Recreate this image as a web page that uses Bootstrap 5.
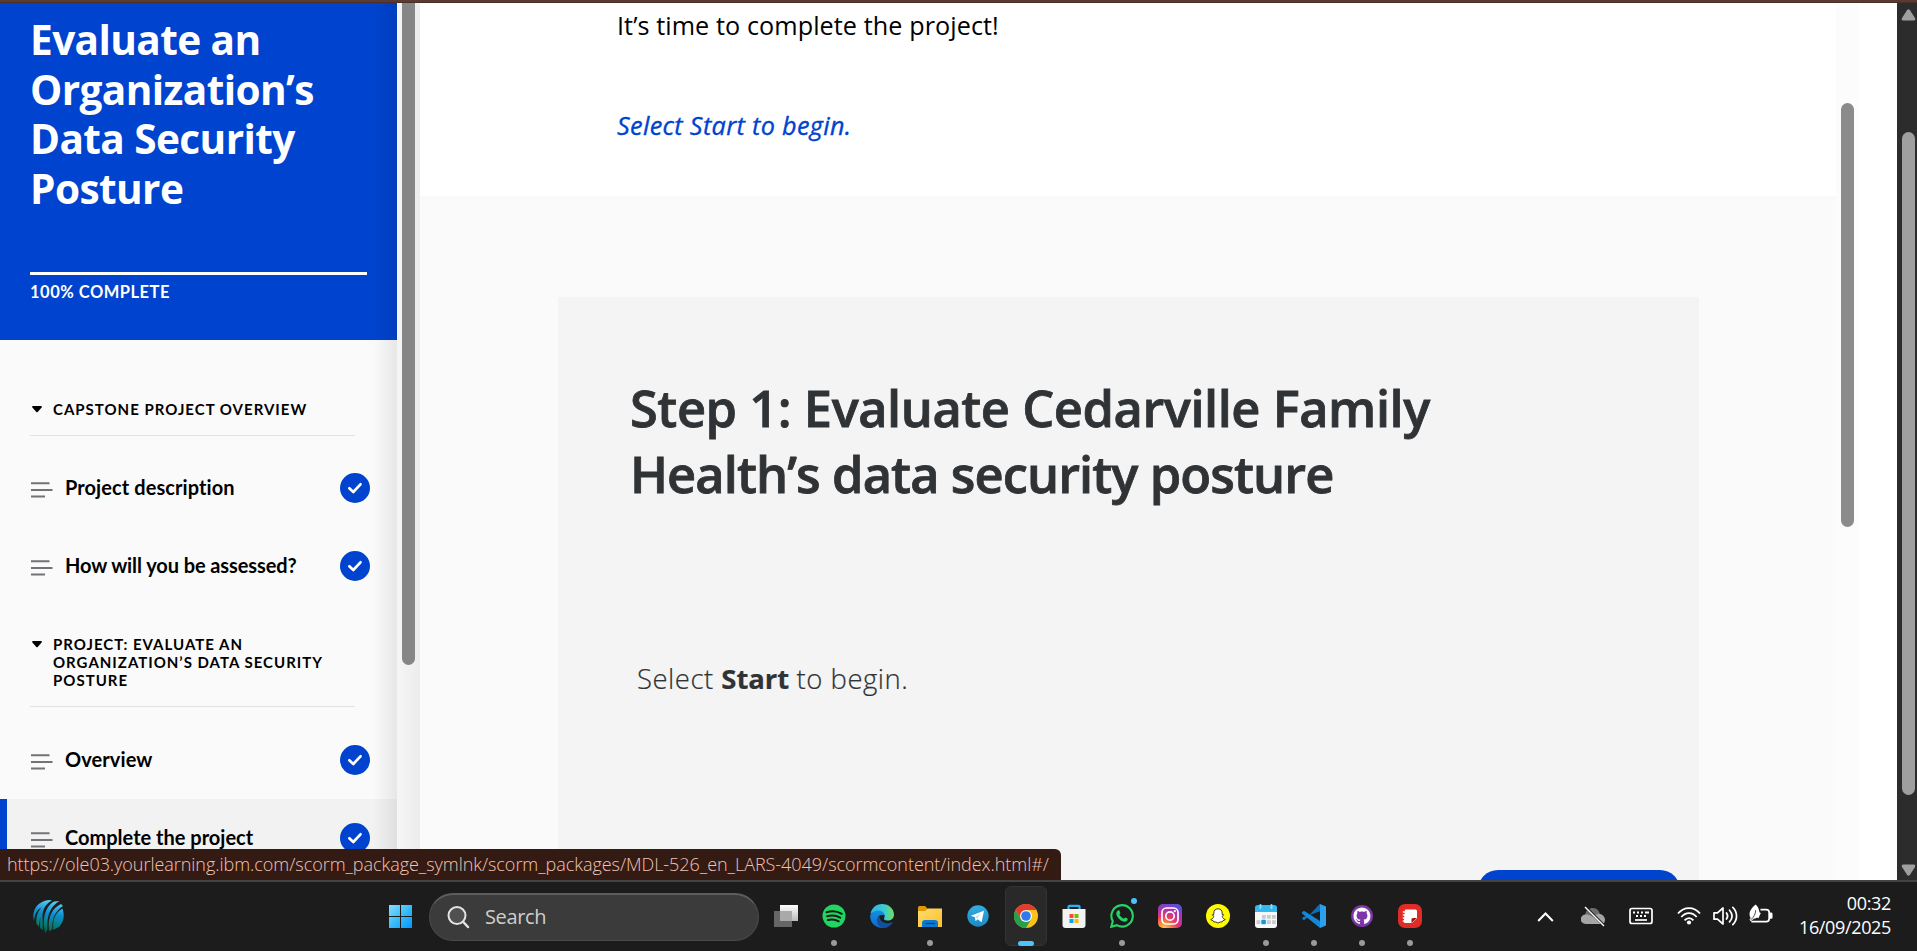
<!DOCTYPE html>
<html lang="en">
<head>
<meta charset="utf-8">
<meta name="viewport" content="width=device-width, initial-scale=1">
<title>Evaluate an Organization’s Data Security Posture</title>
<link href="https://cdn.jsdelivr.net/npm/bootstrap@5.3.0/dist/css/bootstrap.min.css" rel="stylesheet">
<style>
  :root { --brand: #0043ce; }
  body { height: 951px; overflow: hidden; font-family: "Open Sans", "Noto Sans", sans-serif; background: #fff; color: #000; line-height: 1.2; }
  .tab-edge { height: 3px; flex: none; background: #5a3a32; border-bottom: 1px solid #4a2f28; }
  .viewport { height: 877px; flex: none; }
  /* sidebar */
  .course-nav { width: 397px; flex: none; background: #fafafa; font-family: Lato, sans-serif; }
  .course-nav::after { content: ""; position: absolute; inset: 0 0 0 auto; width: 24px; background: linear-gradient(90deg, rgba(0,0,0,0), rgba(0,0,0,.08)); pointer-events: none; }
  .course-head { height: 337px; flex: none; background: var(--brand); padding: 12px 30px 0 30px; color: #fff; }
  .course-title { font: 700 40.6px/49.6px "Open Sans", sans-serif; height: 257px; margin: 0; letter-spacing: -.6px; white-space: nowrap; }
  .course-bar { height: 3px; background: #fff; }
  .course-pct { font-size: 16.5px; line-height: 20px; font-weight: 700; letter-spacing: .5px; margin-top: 7px; }
  .group-head { margin: 0 42px 13px 30px; padding: 30px 0 17px; border-bottom: 1px solid #e2e2e2; font-size: 15px; line-height: 18px; font-weight: 700; letter-spacing: 1px; gap: 10px; white-space: nowrap; }
  .group-head svg { margin-left: 1px; }
  .group-head.first-group { padding-top: 60px; }
  .group-head.tall-gap { margin-bottom: 14px; }
  .lesson { height: 78px; flex: none; padding: 0 27px 0 30px; font-size: 20px; font-weight: 700; letter-spacing: .08px; }
  .lesson span { margin-left: 12px; margin-top: -2px; }
  .lesson.active { background: #f2f2f2; box-shadow: inset 7px 0 var(--brand); }
  .rail { width: 23px; flex: none; padding: 0 5px; background: linear-gradient(90deg, #f6f6f6, #ececec); }
  .thumb { width: 13px; border-radius: 7px; background: #868686; }
  /* content */
  .intro { height: 193px; flex: none; padding: 2px 0 0 197px; font-size: 25.2px; line-height: 40px; }
  .intro p { margin: 0 0 60px; white-space: nowrap; letter-spacing: .08px; }
  .intro .cue { color: var(--brand); font-style: italic; font-weight: 500; letter-spacing: .35px; margin: 0; -webkit-text-stroke: .35px var(--brand); }
  .stage { background: #fafafa; padding: 101px 137px 0 138px; }
  .step { background: #f4f4f4; padding: 78px 20px 0 72px; height: 583px; color: #303336; }
  .step h1 { font-size: 50.6px; line-height: 66px; font-weight: 600; margin: 0; white-space: nowrap; letter-spacing: -.46px; -webkit-text-stroke: .8px #303336; }
  .step h1 .line2 { letter-spacing: -.92px; }
  .step .start-cue { font-size: 27.5px; line-height: 40px; font-weight: 300; margin: 152px 0 0 7px; letter-spacing: .5px; -webkit-text-stroke: .2px #303336; }
  .step .start-cue b { font-weight: 700; letter-spacing: -.1px; }
  .start-btn { width: 202px; height: 40px; border-radius: 20px; background: var(--brand); margin: 171px -1px 0 auto; }
  .inner-rail { width: 23px; flex: none; background: #fcfcfc; padding: 100px 5px 0; }
  .outer-rail { width: 20px; flex: none; background: #2c2c2c; padding: 6px 2px 4px 4px; }
  .outer-rail .thumb { background: #9f9f9f; height: 663px; margin: 111px 0 0 1px; }
  .url-tip { left: 0; bottom: 71px; width: 1061px; height: 31px; background: #331a13; color: #f1c3b6; border-top-right-radius: 6px; padding-left: 7px; font-size: 18px; line-height: 31px; font-weight: 300; letter-spacing: -.04px; white-space: nowrap; }
  /* taskbar */
  .taskbar { height: 71px; flex: none; background: #1c1c1c; border-top: 2px solid #434343; }
  .search-pill { width: 330px; height: 48px; border-radius: 24px; background: #3b3b3b; border: 1px solid #4a4a4a; border-top: 2px solid #5d5d5d; color: #cfcfcf; font-size: 20px; letter-spacing: -.38px; padding-left: 17px; }
  .app { width: 48px; height: 69px; flex: none; position: relative; }
  .app svg { margin-top: -1px; }
  .app.running::after { content: ""; position: absolute; left: 21px; bottom: 5px; width: 6px; height: 6px; border-radius: 3px; background: #9a9a9a; }
  .app.current::before { content: ""; position: absolute; left: 3px; top: 4px; width: 42px; height: 60px; border-radius: 6px; background: #292929; border: 1px solid #333; }
  .app.current::after { content: ""; position: absolute; left: 16px; bottom: 5px; width: 16px; height: 5px; border-radius: 3px; background: #4cc2ff; }
  .app.current svg { position: relative; }
  .clock { font-size: 18px; line-height: 24px; letter-spacing: -.35px; color: #fff; margin: 0 26px 4px 19px; width: 99px; }
  svg { display: block; flex: none; }
</style>
</head>
<body class="d-flex flex-column">
<svg width="0" height="0" class="position-absolute">
  <symbol id="lines" viewBox="0 0 23 18"><path d="M1 2.200h18.500M1 9h21.500M1 15.500h14" stroke="#737377" stroke-width="2" fill="none"/></symbol>
  <symbol id="tick" viewBox="0 0 30 30"><circle cx="15" cy="15" r="15" fill="#0043ce"/><path d="M9.300 15.300l4 3.700 7.200-7.700" fill="none" stroke="#fff" stroke-width="2.700" stroke-linecap="round" stroke-linejoin="round"/></symbol>
  <symbol id="caret" viewBox="0 0 12 18"><path d="M1.800 6h8.400q1.200.4.400 1.400L6.700 12q-.7.7-1.400 0L1.400 7.400Q.6 6.400 1.800 6z"/></symbol>
</svg>
<div class="tab-edge"></div>
<div class="viewport d-flex overflow-hidden">
  <aside class="course-nav d-flex flex-column position-relative overflow-hidden">
    <header class="course-head">
      <h2 class="course-title">Evaluate an<br>Organization’s<br>Data Security<br>Posture</h2>
      <div class="course-bar"></div>
      <div class="course-pct">100% COMPLETE</div>
    </header>
    <div class="group-head first-group d-flex"><svg width="12" height="18"><use href="#caret"/></svg><div>CAPSTONE PROJECT OVERVIEW</div></div>
    <div class="lesson d-flex align-items-center"><svg width="23" height="18" class="mt-1"><use href="#lines"/></svg><span>Project description</span><svg width="30" height="30" class="ms-auto"><use href="#tick"/></svg></div>
    <div class="lesson d-flex align-items-center"><svg width="23" height="18" class="mt-1"><use href="#lines"/></svg><span style="letter-spacing:-.09px">How will you be assessed?</span><svg width="30" height="30" class="ms-auto"><use href="#tick"/></svg></div>
    <div class="group-head tall-gap d-flex"><svg width="12" height="18"><use href="#caret"/></svg><div>PROJECT: EVALUATE AN<br>ORGANIZATION’S DATA SECURITY<br>POSTURE</div></div>
    <div class="lesson d-flex align-items-center"><svg width="23" height="18" class="mt-1"><use href="#lines"/></svg><span>Overview</span><svg width="30" height="30" class="ms-auto"><use href="#tick"/></svg></div>
    <div class="lesson active d-flex align-items-center"><svg width="23" height="18" class="mt-1"><use href="#lines"/></svg><span style="letter-spacing:0">Complete the project</span><svg width="30" height="30" class="ms-auto"><use href="#tick"/></svg></div>
  </aside>
  <div class="rail"><div class="thumb rounded-top-0" style="height:662px"></div></div>
  <main class="d-flex flex-column flex-grow-1">
    <section class="intro"><p>It’s time to complete the project!</p><p class="cue">Select Start to begin.</p></section>
    <section class="stage flex-grow-1">
      <div class="step">
        <h1>Step 1: Evaluate Cedarville Family<br><span class="line2">Health’s data security posture</span></h1>
        <p class="start-cue">Select <b>Start</b> to begin.</p>
        <div class="start-btn"></div>
      </div>
    </section>
  </main>
  <div class="inner-rail"><div class="thumb" style="height:424px;background:#8b8b8b"></div></div>
  <div style="width:38px" class="flex-shrink-0"></div>
  <div class="outer-rail d-flex flex-column">
    <svg width="15" height="12" viewBox="0 0 15 12"><path d="M6 1.300q1.500-2 3 0l5 7.700q1 2.500-1.500 2.500h-10Q0 11.500 1 9z" fill="#9f9f9f"/></svg>
    <div class="thumb"></div>
    <svg class="mt-auto" width="15" height="12" viewBox="0 0 15 12"><path d="M6 10.700q1.500 2 3 0l5-7.700q1-2.500-1.500-2.500h-10Q0 .5 1 3z" fill="#9f9f9f"/></svg>
  </div>
</div>
<div class="url-tip position-absolute">https://ole03.yourlearning.ibm.com/scorm_package_symlnk/scorm_packages/MDL-526_en_LARS-4049/scormcontent/index.html#/</div>

<footer class="taskbar d-flex align-items-center">
  <div style="width:389px" class="flex-shrink-0 ps-4">
    <svg style="margin-left:8px" width="32" height="34" viewBox="0 0 32 34">
      <defs><linearGradient id="icc" x1=".6" y1="0" x2=".4" y2="1"><stop offset="0" stop-color="#5fd0f2"/><stop offset=".4" stop-color="#0c8fce"/><stop offset=".75" stop-color="#087a70"/><stop offset="1" stop-color="#064f35"/></linearGradient></defs>
      <path fill="url(#icc)" d="M2 21C-1 10 6 1 17 0l3 .5C13 4 10 11 10.500 18L11 30l-3-2 .3-11-1.500 9.500L4.500 24C3.500 17 6 11 9.500 7.500 5 9.500 2.500 15 2 21zM12.500 31C10 17 14 6 22 1.500L27.500 1C19 6 14.500 15 15.500 29l-2 4.500zM17 30.500C15.500 19 19 8.500 29 4l2 2c-8 5-11.500 14-10.500 23l-3 2.500zM21.500 30c-1.500-9 1.500-17.500 9-21.500 2 6 2 12.500-3 18z"/>
    </svg>
  </div>
  <svg width="23" height="23" viewBox="0 0 23 23"><defs><linearGradient id="win" x1="0" y1="0" x2="23" y2="23" gradientUnits="userSpaceOnUse"><stop stop-color="#84dfff"/><stop offset=".5" stop-color="#38bdf9"/><stop offset="1" stop-color="#0694ff"/></linearGradient></defs><path fill="url(#win)" d="M0 0h11v11H0zM12 0h11v11H12zM0 12h11v11H0zM12 12h11v11H12z"/></svg>
  <div class="search-pill d-flex align-items-center" style="margin-left:17px">
    <svg width="23" height="23" viewBox="0 0 23 23" fill="none" stroke="#e1e4e6" stroke-linecap="round"><circle cx="10" cy="9.500" r="8.500" stroke-width="2" fill="#505050"/><path d="M16.300 16l4.700 5" stroke-width="2.500"/></svg>
    <span style="margin-left:15px">Search</span>
  </div>
  <div class="d-flex" style="margin-left:3px">
    <div class="app d-flex align-items-center justify-content-center"><svg width="24" height="24" viewBox="0 0 24 24"><defs><linearGradient id="tv" x2="0" y2="1"><stop stop-color="#fff"/><stop offset="1" stop-color="#b9b9b9"/></linearGradient></defs><path fill="url(#tv)" d="M6 1h18v16H6z"/><path fill="#666" d="M0 7h18v16H0z"/><path fill="#a9a9a9" d="M6 7h12v10H6z"/></svg></div>
    <div class="app running d-flex align-items-center justify-content-center"><svg width="24" height="24" viewBox="0 0 24 24"><circle cx="12" cy="12" r="11.500" fill="#1fd760"/><path d="M4.500 8.300c5-1.500 11-1 15.300 1.500M5.200 12.300c4.500-1.200 9.300-.7 13 1.400M5.800 16c3.800-.9 7.800-.5 11 1.300" fill="none" stroke="#161a17" stroke-width="2" stroke-linecap="round"/></svg></div>
    <div class="app d-flex align-items-center justify-content-center"><svg width="24" height="24" viewBox="0 0 24 24"><defs><linearGradient id="e1"><stop stop-color="#2bb3ea"/><stop offset=".6" stop-color="#3ccbd0"/><stop offset="1" stop-color="#6fe05a"/></linearGradient><linearGradient id="e2" x2="0" y2="1"><stop stop-color="#1490e0"/><stop offset="1" stop-color="#1266c4"/></linearGradient></defs><path fill="url(#e1)" d="M.5 10C1.500 4 6 0 12 0c7 0 12 5 12 10.500 0 4-3 6-6.500 6-3 0-4-1.300-3.300-2.500C16 11 13 7.500 9 7.500 5 7.500 1.500 9 .5 10z"/><path fill="url(#e2)" d="M.2 13C0 9 4 6.500 8.500 6.500c3.500 0 6 2.500 6 5-6-2-8 3-6 7 1 2.500 3 4.500 6 5.200C7 25 .5 20 .2 13z"/><path fill="#10509c" d="M9.500 11c-4 3-3.500 12 4 12.900 4 .1 7-2 9-5 .5-.8-.2-1-.8-.7-5 2.600-13-.2-12.200-7.200z"/></svg></div>
    <div class="app running d-flex align-items-center justify-content-center"><svg width="24" height="24" viewBox="0 0 24 24"><defs><linearGradient id="fo" x2="1" y2="1"><stop stop-color="#ffdc6b"/><stop offset="1" stop-color="#fcc02e"/></linearGradient></defs><path fill="#dd9a08" d="M0 3.500Q0 2 1.500 2H7l3 3h13v5H0z"/><path fill="url(#fo)" d="M0 7h7l3-2.500h14V23H0z"/><path fill="#0b79d0" d="M4 23v-4q0-3 3-3h10q3 0 3 3v4z"/><path d="M7.500 19.500h9.500" stroke="#063f77" stroke-width="1.200"/></svg></div>
    <div class="app d-flex align-items-center justify-content-center"><svg width="24" height="24" viewBox="0 0 24 24"><defs><linearGradient id="tg" x2="0" y2="1"><stop stop-color="#35aee2"/><stop offset="1" stop-color="#1b89c6"/></linearGradient></defs><circle cx="12" cy="12" r="10.700" fill="url(#tg)"/><path fill="#fff" d="M4.800 11.700L18 6.800l-2.400 11.400-4-3-2 2-.8-4z"/><path d="M9 13.300l6-4-4 5" fill="#b9dcf0"/></svg></div>
    <div class="app current d-flex align-items-center justify-content-center"><svg width="24" height="24" viewBox="0 0 24 24"><circle cx="12" cy="12" r="12" fill="#fbc116"/><path fill="#e33b2e" d="M1.600 6A12 12 0 0 1 22.400 6H12L6.800 15z"/><path fill="#2a9e48" d="M1.600 6A12 12 0 0 0 12 24l5.200-9H6.800z"/><circle cx="12" cy="12" r="6" fill="#fff"/><circle cx="12" cy="12" r="4.800" fill="#2f7bee"/></svg></div>
    <div class="app d-flex align-items-center justify-content-center"><svg width="24" height="24" viewBox="0 0 24 24"><path d="M6.500 6V2.800q0-1 1-1h9q1 0 1 1V6" fill="none" stroke="#25b3f2" stroke-width="2.200"/><path fill="#f2f2f2" d="M.5 5h23v16q0 3-3 3h-17q-3 0-3-3z"/><path fill="#f25022" d="M7.500 10h4v4h-4z"/><path fill="#7fba00" d="M12.500 10h4v4h-4z"/><path fill="#00a4ef" d="M7.500 15h4v4h-4z"/><path fill="#ffb900" d="M12.500 15h4v4h-4z"/></svg></div>
    <div class="app running d-flex align-items-center justify-content-center"><svg width="24" height="24" viewBox="0 0 24 24"><path d="M1.300 22.800l1.500-5.600a10.700 10.700 0 1 1 4 4z" fill="none" stroke="#25d366" stroke-width="2.100"/><path fill="#25d366" d="M8.600 6.200c.4 0 .7 0 .9.600l.9 2.100c.1.400-.9 1.300-1 1.700.9 1.900 2.300 3.200 4.200 4.100.5.100 1.200-1.300 1.700-1.200l2.200 1.100c.6.300-.1 3-2.600 3.200-3.500.2-8.600-4.500-8.600-8.300 0-1.900 1.400-3.300 2.300-3.300z"/></svg><span class="position-absolute rounded-circle" style="left:33px;top:16px;width:6px;height:6px;background:#4cc2ff"></span></div>
    <div class="app d-flex align-items-center justify-content-center"><svg width="24" height="24" viewBox="0 0 24 24"><defs><radialGradient id="ig" cx=".25" cy="1.050" r="1.100"><stop stop-color="#ffd35a"/><stop offset=".25" stop-color="#fb8a3c"/><stop offset=".5" stop-color="#e73a68"/><stop offset=".75" stop-color="#b62fae"/><stop offset="1" stop-color="#5c4fd6"/></radialGradient></defs><rect width="24" height="24" rx="5" fill="url(#ig)"/><rect x="4" y="4" width="16" height="16" rx="4.500" fill="none" stroke="#fff" stroke-width="1.700"/><circle cx="12" cy="12" r="4.200" fill="none" stroke="#fff" stroke-width="1.700"/><circle cx="16.800" cy="7.200" r="1.100" fill="#fff"/></svg></div>
    <div class="app d-flex align-items-center justify-content-center"><svg width="24" height="24" viewBox="0 0 24 24"><circle cx="12" cy="12" r="12" fill="#fffc00"/><path fill="#fff" stroke="#222" stroke-width=".9" d="M12 4.800c2.700 0 4.200 1.800 4.200 4.300v1.500l1.400.1-1.300 1.700c.4 1.700 1.400 2.700 3 3.200l-2.500 1.200-.6 1.100-2 .1-2.200 1-2.200-1-2-.1-.6-1.100-2.500-1.200c1.600-.5 2.600-1.500 3-3.200l-1.300-1.700 1.400-.1V9.100c0-2.500 1.500-4.300 4.200-4.300z"/></svg></div>
    <div class="app running d-flex align-items-center justify-content-center"><svg width="24" height="24" viewBox="0 0 24 24"><rect x="1" y="2" width="22" height="22" rx="3" fill="#f6f8f9"/><path fill="#34b8ee" d="M1 8V4q0-3 3-3h16q3 0 3 3v4z"/><path stroke="#7fe0ff" stroke-width="2" stroke-linecap="round" d="M6.500 1v3M17.500 1v3"/><path fill="#c9cccf" d="M8 11h3.800v3.800H8zM13 11h3.800v3.800H13zM18 11h3.800v3.800H18zM2.500 16.300h3.800v3.800H2.500zM13 16.300h3.800v3.800H13zM18 16.300h3.800v3.800H18z"/><rect x="7.300" y="15.700" width="4.600" height="4.600" rx="1" fill="#1597e0"/></svg></div>
    <div class="app running d-flex align-items-center justify-content-center"><svg width="24" height="24" viewBox="0 0 24 24"><path fill="#0a7fcf" d="M18 0L5 13.800 2 16.300l-2-1.600L1 13.200 18 7z"/><path fill="#1388d8" d="M2 6.700L18 17v7L0 9.600V8.300z"/><path fill="#0a6fb8" d="M18 0L7.500 11 18 7z"/><path fill="#2ba0ee" d="M18 0l6 2.600v18.800L18 24z"/></svg></div>
    <div class="app running d-flex align-items-center justify-content-center"><svg width="24" height="24" viewBox="0 0 24 24"><circle cx="12" cy="12" r="11" fill="#7d35a8"/><path fill="#fff" transform="translate(3.500 3.500) scale(1.060)" d="M8 0C3.580 0 0 3.580 0 8c0 3.540 2.290 6.530 5.470 7.590.4.070.55-.17.550-.38 0-.19-.01-.82-.01-1.490-2.010.37-2.530-.49-2.690-.94-.09-.23-.48-.94-.82-1.130-.28-.15-.68-.52-.01-.53.63-.01 1.080.58 1.230.82.720 1.210 1.870.87 2.330.66.070-.52.280-.87.510-1.070-1.780-.2-3.640-.89-3.640-3.950 0-.87.310-1.590.82-2.150-.08-.2-.36-1.020.08-2.120 0 0 .67-.21 2.200.82.640-.18 1.320-.27 2-.27s1.360.09 2 .27c1.530-1.040 2.200-.82 2.200-.82.440 1.100.16 1.920.08 2.120.51.560.82 1.270.82 2.150 0 3.070-1.870 3.750-3.650 3.950.29.250.54.730.54 1.480 0 1.070-.01 1.930-.01 2.200 0 .21.150.46.550.38A8.010 8.010 0 0 0 16 8c0-4.420-3.580-8-8-8z"/></svg></div>
    <div class="app running d-flex align-items-center justify-content-center"><svg width="24" height="24" viewBox="0 0 24 24"><rect width="24" height="24" rx="7" fill="#e02b27"/><path fill="#fff" d="M7 5.500h10.500q1.500 0 1.500 1.500v7.500l-5 4.500H7q-1.200 0-1.200-1.300z"/><path d="M4.800 8h3M4.800 11h3M4.800 14h3M4.800 17h3" stroke="#fff" stroke-width="1.500"/><path fill="#a8100f" d="M13.500 19v-3.500q0-1.500 1.500-1.500h4z"/></svg></div>
  </div>
  <div class="d-flex align-items-center ms-auto">
    <svg width="17" height="10" viewBox="0 0 17 10"><path d="M1.200 9l7.300-7.500L15.800 9" fill="none" stroke="#fff" stroke-width="2"/></svg>
    <svg width="25" height="22" viewBox="0 0 25 22" style="margin-left:27px"><path fill="#6d6d6d" d="M4 9c1-5 4-7 8-7s6 3 7 6l-8 6z"/><path fill="#a5a5a5" d="M4.500 18a4.500 4.500 0 0 1 0-9.500c3 0 5 .5 7 2.500 3-3 6-3.500 9-2.500 5 2.500 4.500 9.500-.5 9.500z"/><path d="M4.500 1l19 19" stroke="#1c1c1c" stroke-width="2.500"/><path d="M4 1l19 19" stroke="#fff" stroke-width="1.500"/></svg>
    <svg width="24" height="18" viewBox="0 0 24 18" style="margin:0 0 2px 23px"><rect x="1" y="1.500" width="22" height="15" rx="2" fill="none" stroke="#fff" stroke-width="1.700"/><path d="M4 5.500h2m2 0h2m2 0h2m2 0h4M7 9h2m2 0h2m2 0h2" stroke="#fff" stroke-width="2"/><path d="M6 13h12" stroke="#fff" stroke-width="1.700"/></svg>
    <svg width="24" height="20" viewBox="0 0 24 20" style="margin:0 0 2px 24px" fill="none" stroke="#fff" stroke-width="1.800"><path d="M1 7.500c6-7.300 16-7.300 22 0M4.300 11c4.300-5.300 11.100-5.300 15.400 0M7.600 14.300c2.500-3 6.300-3 8.800 0"/><circle cx="12" cy="16.500" r="2.100" fill="#fff" stroke="none"/></svg>
    <svg width="25" height="20" viewBox="0 0 25 20" style="margin:0 0 1px 12px" fill="none" stroke="#fff" stroke-width="1.700" stroke-linejoin="round" stroke-linecap="round"><path d="M1 6.800h3.500L10 2v16l-5.500-4.800H1zM13.500 7c1.500 2 1.500 4 0 6M16.500 4.200c3.300 3.700 3.300 8 0 11.700M19.800 1.300c5 5 5 12.400 0 17.400"/></svg>
    <svg width="25" height="22" viewBox="0 0 26 22" style="margin:0 0 3px 10px"><path d="M13 5.500h6q3 0 3 3V15q0 3-3 3H3.500M12.500 8.500L10 14" fill="none" stroke="#fff" stroke-width="1.800"/><path fill="#fff" d="M22 8.500h2q1.500 0 1.500 1.500v3.500q0 1.500-1.500 1.500h-2zM8 0c5 5 6 13-2 15l-3 2.500L1.500 16l1.300-1.800C-.5 9 3.500 3.500 8 0z"/><path d="M3 16c3-3 5-6 5-10" stroke="#1c1c1c" stroke-width=".8" fill="none"/></svg>
    <div class="clock text-end">00:32<br>16/09/2025</div>
  </div>
</footer>
<script src="https://cdn.jsdelivr.net/npm/bootstrap@5.3.0/dist/js/bootstrap.bundle.min.js"></script>
</body>
</html>
